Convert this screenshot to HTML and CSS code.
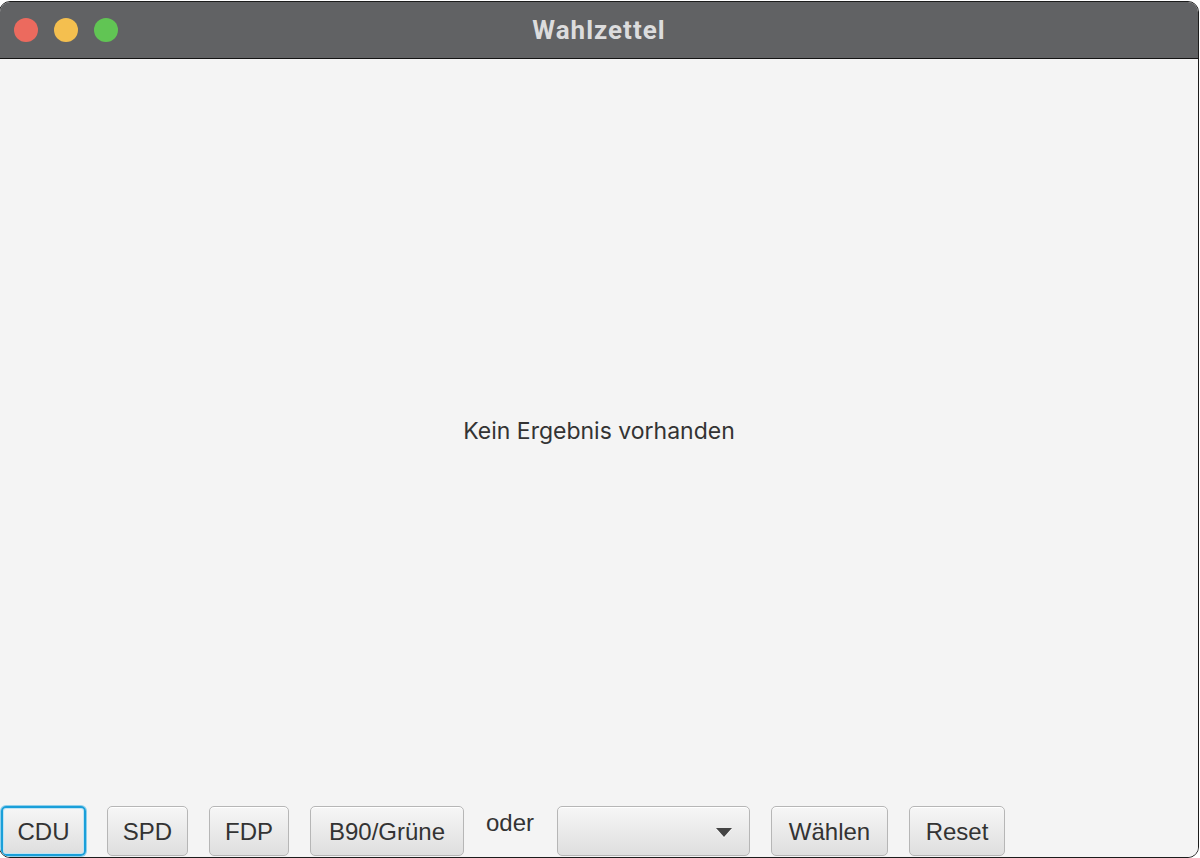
FILE: index.html
```html
<!DOCTYPE html>
<html lang="de">
<head>
<meta charset="utf-8">
<title>Wahlzettel</title>
<link rel="stylesheet" href="styles.css">
</head>
<body>
<div class="window">
  <header class="titlebar">
    <div class="lights">
      <span class="light red"></span>
      <span class="light yellow"></span>
      <span class="light green"></span>
    </div>
    <div class="title">Wahlzettel</div>
  </header>
  <main class="content">
    <div class="result">Kein Ergebnis vorhanden</div>
    <div class="controls">
      <button class="btn btn-cdu focused">CDU</button>
      <button class="btn btn-spd">SPD</button>
      <button class="btn btn-fdp">FDP</button>
      <button class="btn btn-gruene">B90/Grüne</button>
      <span class="oder">oder</span>
      <div class="combo"><span class="arrow"></span></div>
      <button class="btn btn-waehlen">Wählen</button>
      <button class="btn btn-reset">Reset</button>
    </div>
  </main>
</div>
</body>
</html>
```

FILE: styles.css
```css
html, body {
  margin: 0;
  padding: 0;
  background: #ffffff;
  width: 1200px;
  height: 858px;
  overflow: hidden;
}

.window {
  box-sizing: border-box;
  margin: 1px 0 0 -1px;
  width: 1200px;
  height: 857px;
  border: 1px solid #1c1c1c;
  border-radius: 11px;
  overflow: hidden;
  display: flex;
  flex-direction: column;
  background: #f4f4f4;
}

.titlebar {
  position: relative;
  height: 56px;
  flex: 0 0 56px;
  background: #616264;
  border-bottom: 1px solid #141414;
  display: flex;
  align-items: center;
}

.lights {
  display: flex;
  gap: 16px;
  padding-left: 14px;
}

.light {
  width: 24px;
  height: 24px;
  border-radius: 50%;
  display: block;
}
.red { background: #ec6a5e; }
.yellow { background: #f4bf4f; }
.green { background: #61c554; }

.title {
  position: absolute;
  left: 0;
  right: 0;
  top: 0;
  bottom: 0;
  display: flex;
  align-items: center;
  justify-content: center;
  font-family: Roboto, "Liberation Sans", sans-serif;
  font-weight: 700;
  font-size: 26px;
  letter-spacing: 1px;
  color: #dcdcdd;
}

.content {
  flex: 1;
  display: flex;
  flex-direction: column;
  background: #f4f4f4;
}

.result {
  flex: 1;
  display: flex;
  align-items: center;
  justify-content: center;
  font-family: Inter, "Noto Sans", sans-serif;
  font-size: 23px;
  color: #333333;
  padding-bottom: 3px;
}

.controls {
  display: flex;
  align-items: flex-start;
  gap: 21px;
  height: 51px;
  padding-left: 1px;
}

.btn {
  box-sizing: border-box;
  height: 50px;
  margin: 0;
  padding: 2px 0 0;
  text-align: center;
  font-family: "Liberation Sans", Arial, sans-serif;
  font-size: 24px;
  color: #333333;
  border: 1px solid #b6b6b6;
  border-radius: 5px;
  background: linear-gradient(#f6f6f6, #dedede);
  box-shadow: inset 0 1px 0 #ffffff;
  line-height: 1;
  white-space: nowrap;
  flex: none;
}

.btn-cdu { width: 85px; }
.btn-spd { width: 81px; }
.btn-fdp { width: 80px; }
.btn-gruene { width: 154px; }
.btn-waehlen { width: 117px; }
.btn-reset { width: 96px; }

.btn.focused {
  border: 2px solid #1a9fd9;
  box-shadow: inset 0 0 0 1px #bfe4f4, 0 0 0 1px #8fd0ec;
}

.oder {
  width: 50px;
  padding-left: 1px;
  font-family: "Liberation Sans", Arial, sans-serif;
  font-size: 24px;
  color: #333333;
  margin-top: 3px;
}

.combo {
  box-sizing: border-box;
  width: 193px;
  height: 50px;
  border: 1px solid #b6b6b6;
  border-radius: 5px;
  background: linear-gradient(#f6f6f6, #dedede);
  box-shadow: inset 0 1px 0 #ffffff;
  display: flex;
  align-items: center;
  justify-content: flex-end;
  padding-right: 17px;
  flex: none;
}

.arrow {
  width: 0;
  height: 0;
  border-left: 8px solid transparent;
  border-right: 8px solid transparent;
  border-top: 9px solid #444444;
  filter: drop-shadow(0 1px 0 #ffffff);
  margin-top: 2px;
}
```
